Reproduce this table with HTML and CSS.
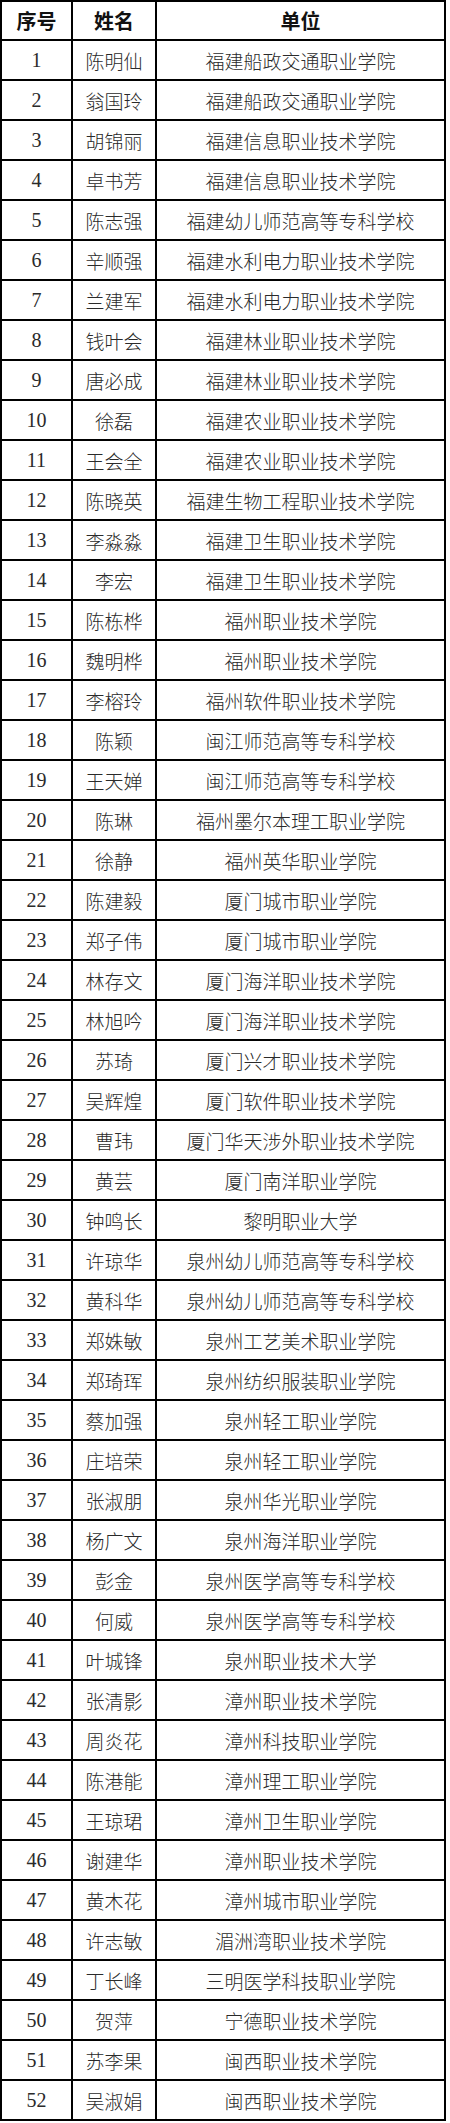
FILE: index.html
```html
<!DOCTYPE html>
<html lang="zh-CN">
<head>
<meta charset="utf-8">
<title>名单</title>
<link rel="stylesheet" href="styles.css">
</head>
<body>
<table class="list">
<colgroup><col class="c-no"><col class="c-name"><col class="c-unit"></colgroup>
<thead>
<tr class="head"><th>序号</th><th>姓名</th><th>单位</th></tr>
</thead>
<tbody>
<tr><td class="num">1</td><td>陈明仙</td><td>福建船政交通职业学院</td></tr>
<tr><td class="num">2</td><td>翁国玲</td><td>福建船政交通职业学院</td></tr>
<tr><td class="num">3</td><td>胡锦丽</td><td>福建信息职业技术学院</td></tr>
<tr><td class="num">4</td><td>卓书芳</td><td>福建信息职业技术学院</td></tr>
<tr><td class="num">5</td><td>陈志强</td><td>福建幼儿师范高等专科学校</td></tr>
<tr><td class="num">6</td><td>辛顺强</td><td>福建水利电力职业技术学院</td></tr>
<tr><td class="num">7</td><td>兰建军</td><td>福建水利电力职业技术学院</td></tr>
<tr><td class="num">8</td><td>钱叶会</td><td>福建林业职业技术学院</td></tr>
<tr><td class="num">9</td><td>唐必成</td><td>福建林业职业技术学院</td></tr>
<tr><td class="num">10</td><td>徐磊</td><td>福建农业职业技术学院</td></tr>
<tr><td class="num">11</td><td>王会全</td><td>福建农业职业技术学院</td></tr>
<tr><td class="num">12</td><td>陈晓英</td><td>福建生物工程职业技术学院</td></tr>
<tr><td class="num">13</td><td>李淼淼</td><td>福建卫生职业技术学院</td></tr>
<tr><td class="num">14</td><td>李宏</td><td>福建卫生职业技术学院</td></tr>
<tr><td class="num">15</td><td>陈栋桦</td><td>福州职业技术学院</td></tr>
<tr><td class="num">16</td><td>魏明桦</td><td>福州职业技术学院</td></tr>
<tr><td class="num">17</td><td>李榕玲</td><td>福州软件职业技术学院</td></tr>
<tr><td class="num">18</td><td>陈颖</td><td>闽江师范高等专科学校</td></tr>
<tr><td class="num">19</td><td>王天婵</td><td>闽江师范高等专科学校</td></tr>
<tr><td class="num">20</td><td>陈琳</td><td>福州墨尔本理工职业学院</td></tr>
<tr><td class="num">21</td><td>徐静</td><td>福州英华职业学院</td></tr>
<tr><td class="num">22</td><td>陈建毅</td><td>厦门城市职业学院</td></tr>
<tr><td class="num">23</td><td>郑子伟</td><td>厦门城市职业学院</td></tr>
<tr><td class="num">24</td><td>林存文</td><td>厦门海洋职业技术学院</td></tr>
<tr><td class="num">25</td><td>林旭吟</td><td>厦门海洋职业技术学院</td></tr>
<tr><td class="num">26</td><td>苏琦</td><td>厦门兴才职业技术学院</td></tr>
<tr><td class="num">27</td><td>吴辉煌</td><td>厦门软件职业技术学院</td></tr>
<tr><td class="num">28</td><td>曹玮</td><td>厦门华天涉外职业技术学院</td></tr>
<tr><td class="num">29</td><td>黄芸</td><td>厦门南洋职业学院</td></tr>
<tr><td class="num">30</td><td>钟鸣长</td><td>黎明职业大学</td></tr>
<tr><td class="num">31</td><td>许琼华</td><td>泉州幼儿师范高等专科学校</td></tr>
<tr><td class="num">32</td><td>黄科华</td><td>泉州幼儿师范高等专科学校</td></tr>
<tr><td class="num">33</td><td>郑姝敏</td><td>泉州工艺美术职业学院</td></tr>
<tr><td class="num">34</td><td>郑琦珲</td><td>泉州纺织服装职业学院</td></tr>
<tr><td class="num">35</td><td>蔡加强</td><td>泉州轻工职业学院</td></tr>
<tr><td class="num">36</td><td>庄培荣</td><td>泉州轻工职业学院</td></tr>
<tr><td class="num">37</td><td>张淑朋</td><td>泉州华光职业学院</td></tr>
<tr><td class="num">38</td><td>杨广文</td><td>泉州海洋职业学院</td></tr>
<tr><td class="num">39</td><td>彭金</td><td>泉州医学高等专科学校</td></tr>
<tr><td class="num">40</td><td>何威</td><td>泉州医学高等专科学校</td></tr>
<tr><td class="num">41</td><td>叶城锋</td><td>泉州职业技术大学</td></tr>
<tr><td class="num">42</td><td>张清影</td><td>漳州职业技术学院</td></tr>
<tr><td class="num">43</td><td>周炎花</td><td>漳州科技职业学院</td></tr>
<tr><td class="num">44</td><td>陈港能</td><td>漳州理工职业学院</td></tr>
<tr><td class="num">45</td><td>王琼珺</td><td>漳州卫生职业学院</td></tr>
<tr><td class="num">46</td><td>谢建华</td><td>漳州职业技术学院</td></tr>
<tr><td class="num">47</td><td>黄木花</td><td>漳州城市职业学院</td></tr>
<tr><td class="num">48</td><td>许志敏</td><td>湄洲湾职业技术学院</td></tr>
<tr><td class="num">49</td><td>丁长峰</td><td>三明医学科技职业学院</td></tr>
<tr><td class="num">50</td><td>贺萍</td><td>宁德职业技术学院</td></tr>
<tr><td class="num">51</td><td>苏李果</td><td>闽西职业技术学院</td></tr>
<tr><td class="num">52</td><td>吴淑娟</td><td>闽西职业技术学院</td></tr>
</tbody>
</table>
</body>
</html>
```

FILE: styles.css
```css
html, body {
  margin: 0;
  padding: 0;
  background: #fff;
}
.list {
  border-collapse: collapse;
  table-layout: fixed;
  width: 446px;
  font-family: "Noto Sans CJK SC", sans-serif;
  font-size: 19px;
  color: #2a2a2a;
}
.c-no { width: 71px; }
.c-name { width: 84px; }
.c-unit { width: 289px; }
.list th, .list td {
  border: 2px solid #000;
  padding: 0;
  text-align: center;
  vertical-align: middle;
  line-height: 1;
  white-space: nowrap;
  overflow: hidden;
}
.list tr { height: 40px; }
.list .head { height: 39px; }
.list th {
  font-weight: 700;
  font-size: 20px;
  color: #111;
}
.list td { font-weight: 300; }
.list .num {
  font-family: "Liberation Serif", serif;
  font-size: 20px;
  font-weight: 400;
}
```
